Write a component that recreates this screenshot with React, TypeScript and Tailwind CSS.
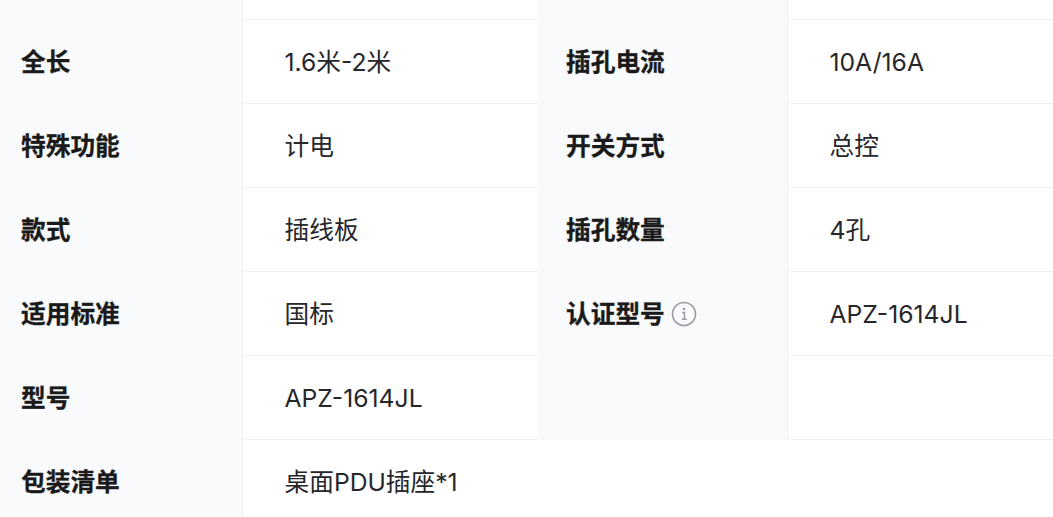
import React from 'react';

const font = "font-['Inter','Noto_Sans_CJK_SC',sans-serif]";

const Label: React.FC<{ children: React.ReactNode; tail?: boolean }> = ({ children, tail }) => (
  <div className={`flex items-center gap-[6px] bg-[#f9fafc] border-r border-[#f0f1f3] h-[84px] pt-[2px] text-[24.7px] font-bold text-[#1a1a1a] [-webkit-text-stroke:0.3px_#1a1a1a] ${tail ? 'pl-[28px]' : 'pl-[21px]'}`}>
    {children}
  </div>
);

const Value: React.FC<{ children?: React.ReactNode }> = ({ children }) => (
  <div className="flex items-center h-[84px] pl-[41.5px] pt-[2px] border-b border-[#f0f1f3] text-[24.7px] text-[#26262b]">{children}</div>
);

const rows: [string, string, string, string][] = [
  ['全长', '1.6米-2米', '插孔电流', '10A/16A'],
  ['特殊功能', '计电', '开关方式', '总控'],
  ['款式', '插线板', '插孔数量', '4孔'],
  ['适用标准', '国标', '认证型号', 'APZ-1614JL'],
  ['型号', 'APZ-1614JL', '', ''],
];

export default function App() {
  return (
    <div className={`w-[1053px] h-[517px] overflow-hidden bg-white ${font}`}>
      <div className="grid grid-cols-[243px_295px_250px_265px]">
        <div className="h-[20px] bg-[#f9fafc] border-r border-[#f0f1f3]" />
        <div className="h-[20px] border-b border-[#f0f1f3]" />
        <div className="h-[20px] bg-[#f9fafc] border-r border-[#f0f1f3]" />
        <div className="h-[20px] border-b border-[#f0f1f3]" />
        {rows.map(([a, b, c, d]) => (
          <React.Fragment key={a}>
            <Label>{a}</Label>
            <Value>{b}</Value>
            <Label tail>
              {c}
              {c === '认证型号' && (
                <svg width="26" height="26" viewBox="0 0 26 26" fill="none" className="-mt-[2px]">
                  <circle cx="13" cy="13" r="11.5" stroke="#9a9ba3" strokeWidth="1.6" />
                  <path d="M11 11.5h2.4v6.5M10.8 18.2h5" stroke="#9a9ba3" strokeWidth="1.5" />
                  <circle cx="13" cy="8" r="1.3" fill="#9a9ba3" />
                </svg>
              )}
            </Label>
            <Value>{d}</Value>
          </React.Fragment>
        ))}
        <div className="h-[84px] bg-[#f9fafc] border-r border-[#f0f1f3] pt-[2px] pl-[21px] flex items-center text-[24.7px] font-bold text-[#1a1a1a] [-webkit-text-stroke:0.3px_#1a1a1a]">包装清单</div>
        <div className="col-span-3 h-[84px] flex items-center pt-[2px] pl-[41.5px] text-[24.7px] text-[#26262b]">桌面PDU插座*1</div>
      </div>
    </div>
  );
}
